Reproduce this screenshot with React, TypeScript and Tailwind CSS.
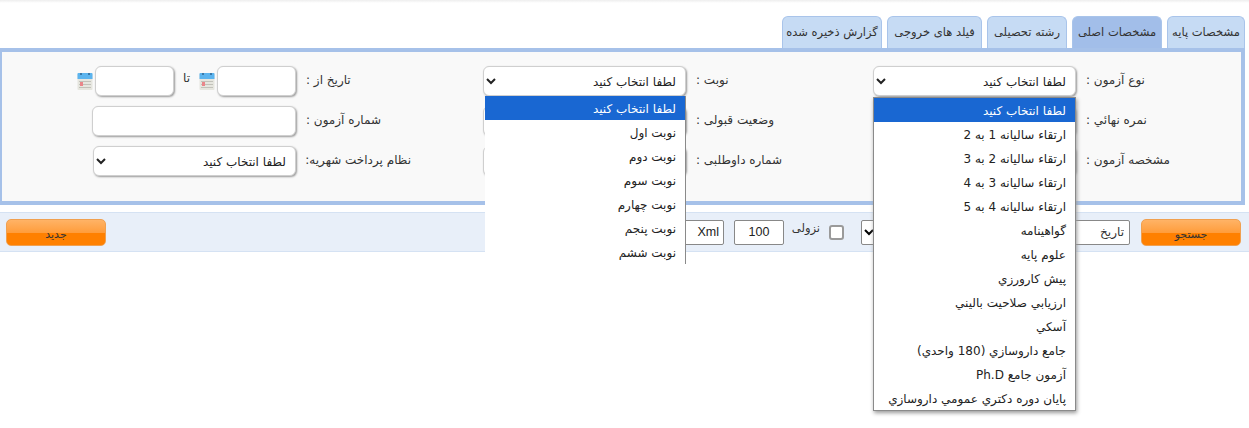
const font = "[font-family:'DejaVu_Sans',Tahoma,sans-serif]";

const tabs = ["مشخصات پایه", "مشخصات اصلی", "رشته تحصیلی", "فیلد های خروجی", "گزارش ذخیره شده"];
const tabWidths = ["w-[78px]", "w-[90px]", "w-[80px]", "w-[95px]", "w-[100px]"];

const shiftOptions = ["لطفا انتخاب کنید", "نوبت اول", "نوبت دوم", "نوبت سوم", "نوبت چهارم", "نوبت پنجم", "نوبت ششم"];
const typeOptions = [
  "لطفا انتخاب کنید",
  "ارتقاء سالیانه 1 به 2",
  "ارتقاء سالیانه 2 به 3",
  "ارتقاء سالیانه 3 به 4",
  "ارتقاء سالیانه 4 به 5",
  "گواهینامه",
  "علوم پایه",
  "پیش کارورزي",
  "ارزیابي صلاحیت بالیني",
  "آسکي",
  "جامع داروسازي (180 واحدي)",
  "آزمون جامع Ph.D",
  "پایان دوره دکتري عمومي داروسازي",
];

const fieldClass =
  "h-[30px] rounded-md border border-[#cfcfcf] bg-white pr-[10px] text-[12px] text-[#222] shadow-[1px_1px_2px_#999]";

function Select() {
  return (
    <select className={`h-[30px] w-[203px] rounded-md border border-[#cfcfcf] bg-white pr-[5px] pt-[2px] text-[12px] text-[#222] shadow-[1px_1px_2px_#999] ${font}`}>
      <option>لطفا انتخاب کنید</option>
    </select>
  );
}

function Dropdown({ options, frame }: { options: string[]; frame: string }) {
  return (
    <div className={`absolute z-10 bg-white ${frame}`}>
      {options.map((o, i) => (
        <div
          key={o}
          className={`h-[24px] pr-[9px] text-[12px] leading-[26px] whitespace-nowrap ${i === 0 ? "bg-[#1967d2] text-white" : "text-[#222]"}`}
        >
          {o}
        </div>
      ))}
    </div>
  );
}

function CalendarIcon() {
  return (
    <svg width="16" height="19" viewBox="0 0 16 19" className="shrink-0">
      <rect x="0.5" y="1" width="15" height="17" rx="1" fill="#e6e6df" />
      <path d="M0.5 2a1 1 0 0 1 1-1h13a1 1 0 0 1 1 1v5H0.5z" fill="#5cb4ee" />
      <rect x="3" y="1" width="2" height="2" fill="#3a78a8" />
      <rect x="11" y="1" width="2" height="2" fill="#3a78a8" />
      <rect x="2" y="9" width="12" height="1" fill="#c2c2ba" />
      <rect x="2" y="12" width="12" height="1" fill="#c2c2ba" />
      <rect x="2" y="15" width="12" height="1" fill="#c2c2ba" />
      <rect x="3" y="10" width="3" height="4" fill="#e9868a" />
    </svg>
  );
}

function Field({ label, children }: { label: string; children: React.ReactNode }) {
  return (
    <div className="flex items-start gap-[10px]">
      <label className="w-[105px] shrink-0 whitespace-nowrap pt-[5px] text-left text-[12px] text-[#333]">{label}</label>
      {children}
    </div>
  );
}

function OrangeButton({ text }: { text: string }) {
  return (
    <button className="h-[27px] w-[100px] shrink-0 rounded-[5px] border border-[#f0a050] bg-[linear-gradient(#ffb366_0%,#ff9d3c_50%,#ff8000_52%,#ff8000_100%)] pt-[6px] text-[11px] text-[#333]">
      {text}
    </button>
  );
}

export default function App() {
  return (
    <div dir="rtl" className={`h-[428px] w-[1249px] overflow-hidden bg-white ${font}`}>
      <div className="h-[3px] bg-gradient-to-b from-[#eeeeee] to-white" />

      <div className="mr-1 mt-[13px] flex gap-[5px]">
        {tabs.map((t, i) => (
          <div
            key={t}
            className={`flex h-[32px] items-center justify-center whitespace-nowrap rounded-t-md border border-b-0 border-[#a9c4ea] text-[11.5px] text-[#333] ${tabWidths[i]} ${i === 1 ? "bg-[#a2bee9]" : "bg-[#c6dbf4]"}`}
          >
            {t}
          </div>
        ))}
      </div>

      <div className="-ml-0.5 mr-1 h-[157px] border-4 border-[#a6c1e9] bg-[#f9f9f9] pr-[50px] pt-[14px]">
        <div className="grid grid-cols-[390px_390px_1fr] gap-y-[10px]">
          <Field label="نوع آزمون :">
            <div className="relative">
              <Select />
              <Dropdown
                options={typeOptions}
                frame="top-[31px] w-[203px] border border-[#8a8a8a] shadow-[1px_2px_4px_#999]"
              />
            </div>
          </Field>
          <Field label="نوبت :">
            <div className="relative">
              <Select />
              <Dropdown
                options={shiftOptions}
                frame="left-[2px] top-[30px] h-[168px] w-[201px] overflow-hidden border-r border-[#8a8a8a]"
              />
            </div>
          </Field>
          <Field label="تاریخ از :">
            <div className="flex items-center">
              <input className={`${fieldClass} w-[79px]`} />
              <div className="mr-[2px]">
                <CalendarIcon />
              </div>
              <span className="mx-[9px] pb-[6px] text-[12px] text-[#333]">تا</span>
              <input className={`${fieldClass} w-[79px]`} />
              <div className="mr-[2px]">
                <CalendarIcon />
              </div>
            </div>
          </Field>

          <Field label="نمره نهائي :">
            <input className={`${fieldClass} w-[203px]`} />
          </Field>
          <Field label="وضعیت قبولی :">
            <input className={`${fieldClass} w-[203px]`} />
          </Field>
          <Field label="شماره آزمون :">
            <input className={`${fieldClass} w-[204px]`} />
          </Field>

          <Field label="مشخصه آزمون :">
            <input className={`${fieldClass} w-[203px]`} />
          </Field>
          <Field label="شماره داوطلبی :">
            <input className={`${fieldClass} w-[203px]`} />
          </Field>
          <Field label="نظام پرداخت شهریه:">
            <Select />
          </Field>
        </div>
      </div>

      <div className="mt-[7px] flex h-[40px] items-center justify-between border-y border-[#d5e2f3] bg-[#e8eff9] pl-[6px] pr-[8px]">
        <div className="flex items-center">
          <OrangeButton text="جستجو" />
          <input
            defaultValue="تاریخ"
            className="mr-[11px] h-[25px] w-[250px] rounded-[2px] border border-[#888] bg-white pr-[5px] text-[12px] text-[#333]"
          />
          <select className="mr-[5px] h-[25px] w-[14px] rounded-[2px] border border-[#888] bg-white" />
          <input
            type="checkbox"
            className="mr-[17px] h-[15px] w-[15px] appearance-none rounded-[3px] border-2 border-[#9a9a9a] bg-white"
          />
          <span className="mr-[9px] w-[36px] pb-[6px] text-[11.5px] text-[#333]">نزولی</span>
          <input
            defaultValue="100"
            className="h-[25px] w-[50px] rounded-[2px] border border-[#888] bg-white text-center font-['Liberation_Sans'] text-[12.5px] text-[#222]"
          />
          <input
            defaultValue="Xml"
            dir="rtl"
            className="mr-[10px] h-[25px] w-[100px] rounded-[2px] border border-[#888] bg-white pr-[4px] font-['Liberation_Sans'] text-[12.5px] text-[#222]"
          />
        </div>
        <OrangeButton text="جدید" />
      </div>
    </div>
  );
}
